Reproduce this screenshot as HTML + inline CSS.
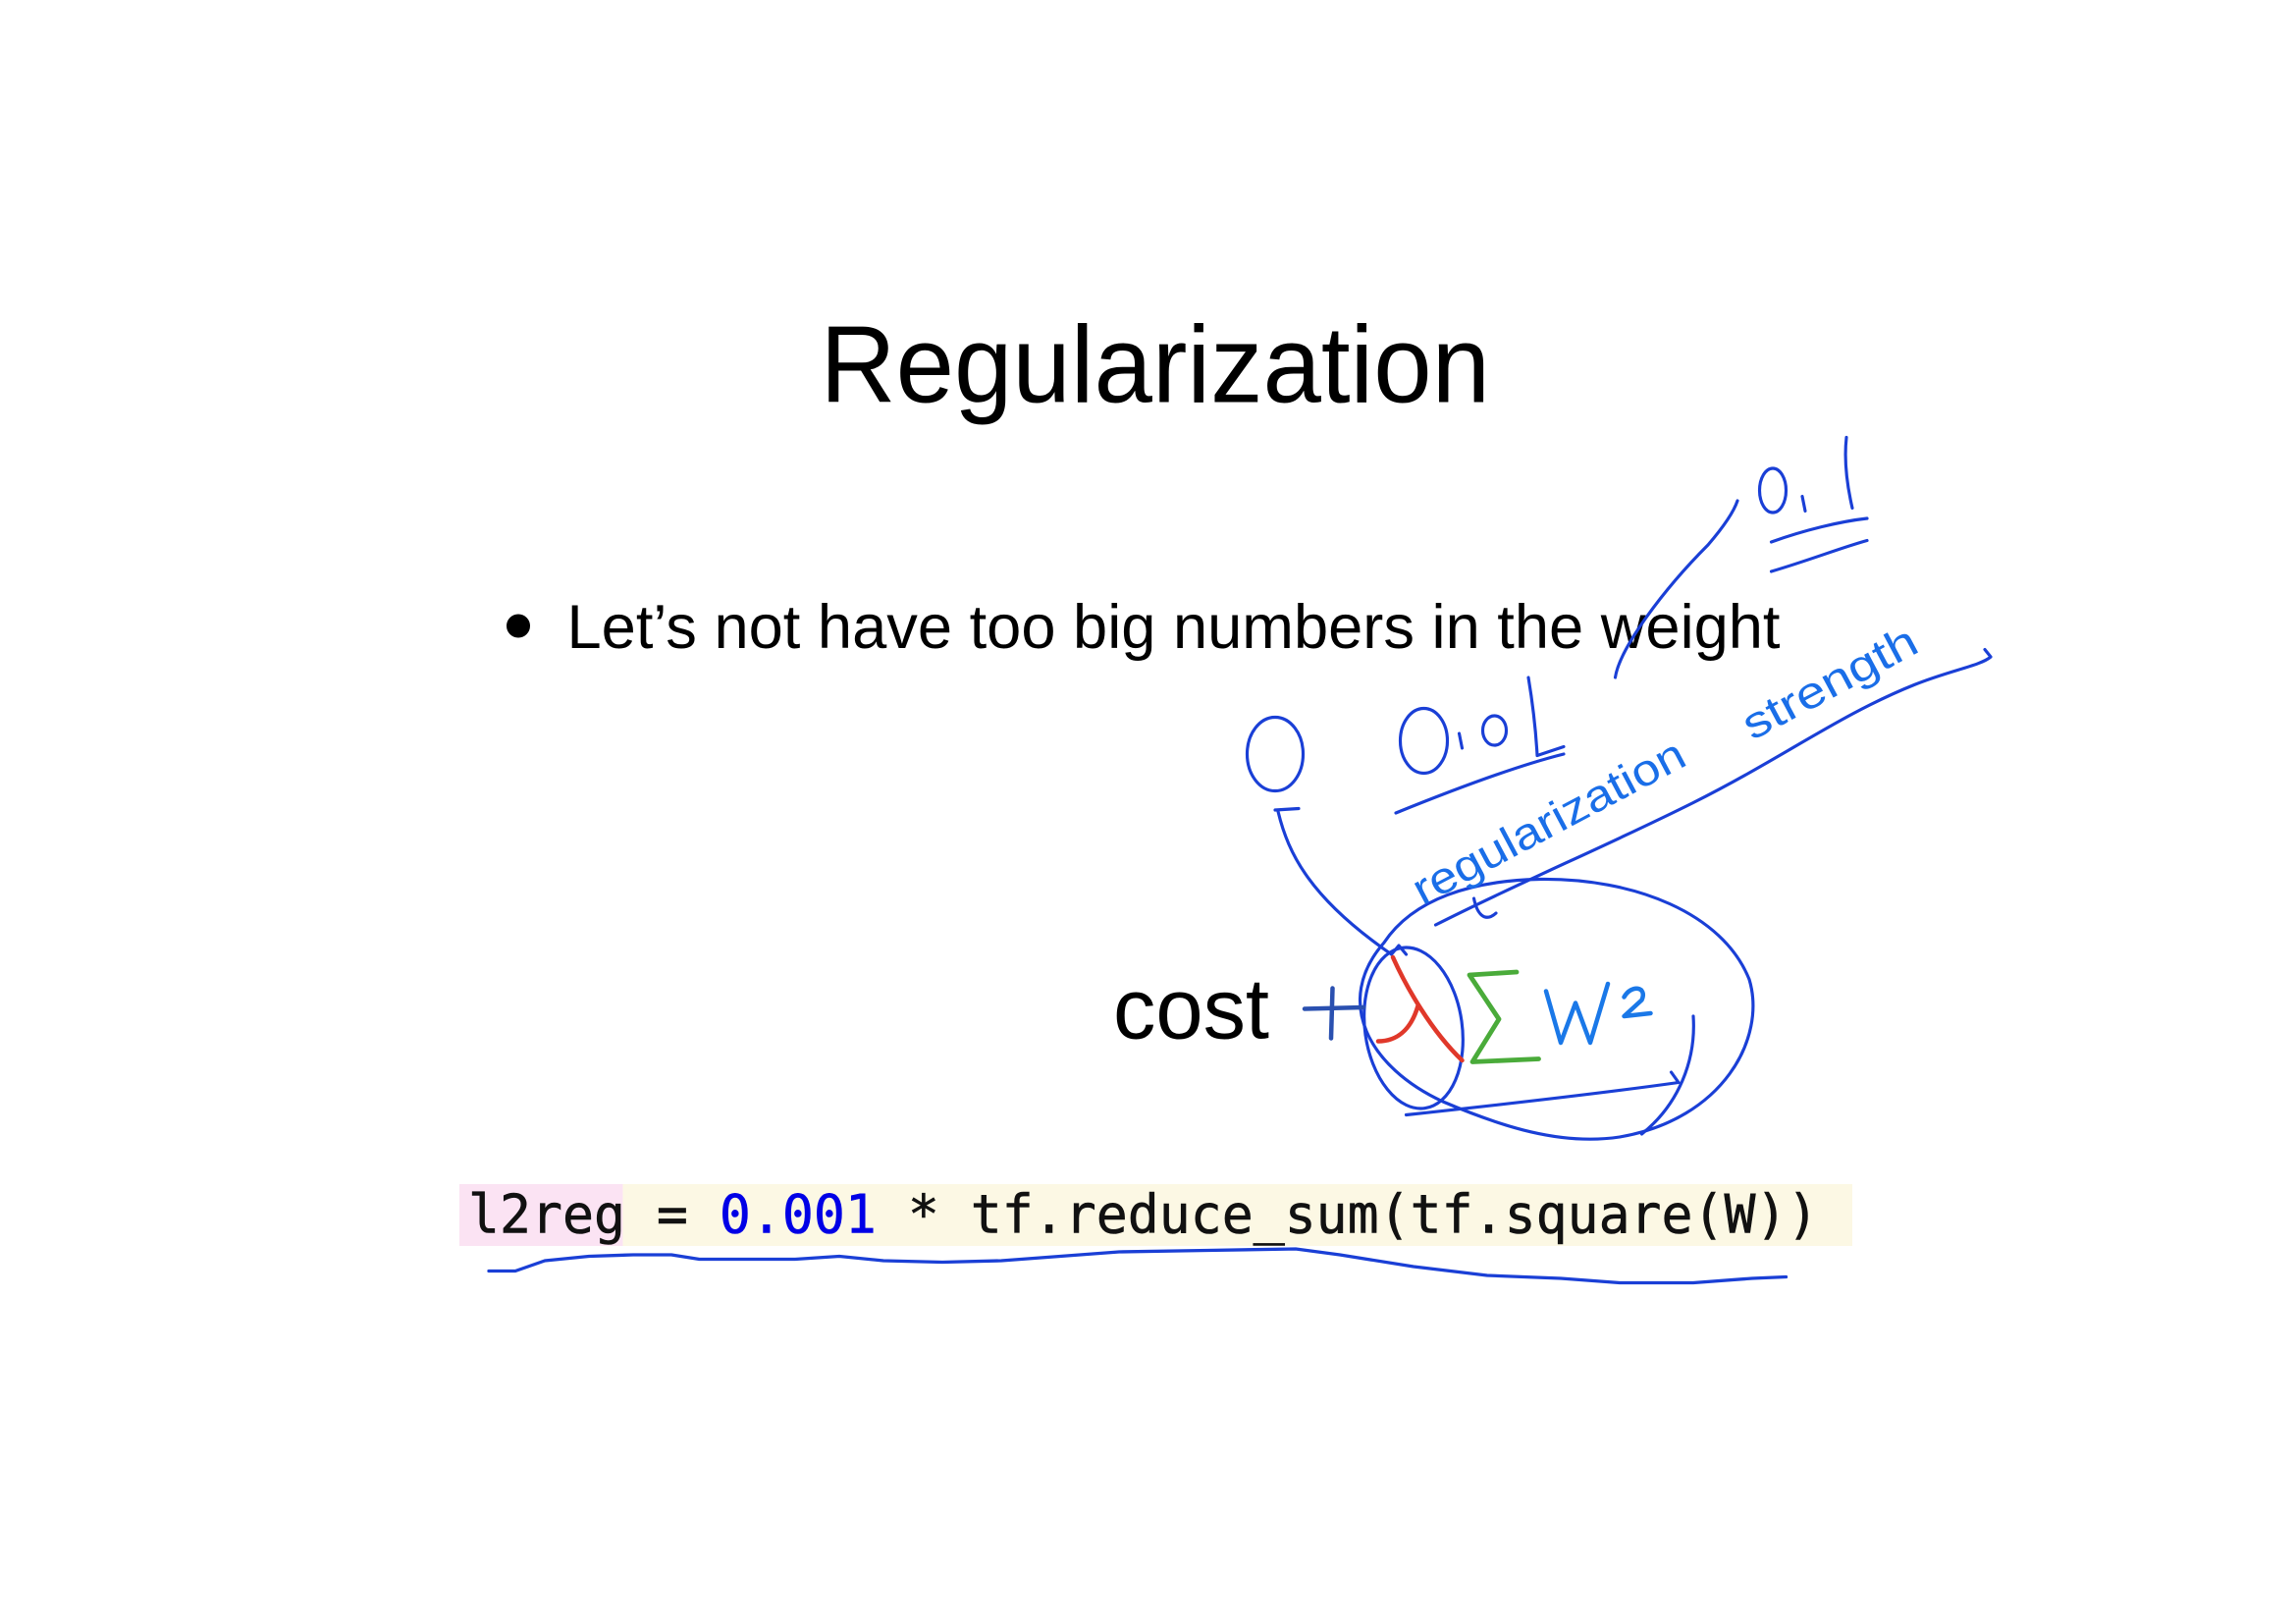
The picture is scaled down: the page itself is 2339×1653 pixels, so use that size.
<!DOCTYPE html>
<html><head><meta charset="utf-8"><style>
html,body{margin:0;padding:0;background:#fff;}
svg{display:block}
</style></head><body>
<svg width="2339" height="1653" viewBox="0 0 1559.33 1102" xmlns="http://www.w3.org/2000/svg">
<rect width="1559.33" height="1102" fill="#fff"/>
<text x="557" y="273" font-family="Liberation Sans, sans-serif" font-size="74" fill="#000" textLength="455" lengthAdjust="spacingAndGlyphs">Regularization</text>
<circle cx="352" cy="425" r="8" fill="#000"/>
<text x="385" y="440" font-family="Liberation Sans, sans-serif" font-size="42" fill="#000" textLength="824" lengthAdjust="spacingAndGlyphs">Let’s not have too big numbers in the weight</text>

<rect x="312" y="804" width="946" height="42" fill="#fcf8e4"/>
<rect x="312" y="804" width="111" height="42" fill="#fbe3f3"/>
<text x="318" y="837" font-family="DejaVu Sans Mono, Liberation Mono, monospace" font-size="36" fill="#111" stroke="#111" stroke-width="0.4" textLength="917" lengthAdjust="spacingAndGlyphs">l2reg = <tspan fill="#0000e6" stroke="#0000e6">0.001</tspan> * tf.reduce_sum(tf.square(W))</text>

<text x="756" y="705" font-family="Liberation Sans, sans-serif" font-size="58" fill="#000" textLength="106" lengthAdjust="spacingAndGlyphs">cost</text>

<g fill="none" stroke="#1a3fd6" stroke-width="2.1" stroke-linecap="round" stroke-linejoin="round">
 <ellipse cx="1204" cy="333" rx="9" ry="15"/>
 <path d="M1224,337 L1226,347"/>
 <path d="M1254,297 C1252,315 1255,332 1258,345"/>
 <path d="M1203,368 C1225,360 1250,354 1268,352"/>
 <path d="M1203,388 C1230,380 1250,372 1268,367"/>
 <path d="M1097,460 C1100,440 1130,400 1160,370 C1172,356 1178,346 1180,340"/>
 <ellipse cx="866" cy="512" rx="19" ry="25"/>
 <path d="M866,550 L882,549"/>
 <path d="M868,551 C875,580 890,610 945,648"/>
 <ellipse cx="967" cy="503" rx="16" ry="22"/>
 <path d="M991,498 L993,508"/>
 <ellipse cx="1015" cy="496" rx="8" ry="10"/>
 <path d="M1038,460 C1041,478 1043,495 1044,513 L1062,507"/>
 <path d="M948,552 C985,537 1030,520 1062,512"/>
 <path d="M975,628 C1030,600 1090,575 1150,545 C1210,515 1250,485 1300,465 C1325,455 1345,452 1352,446 L1348,441"/>
 <path d="M940,640 C960,610 1000,598 1045,597 C1110,596 1170,620 1188,665 C1200,705 1170,760 1100,772 C1060,778 1020,765 980,748 C930,725 905,680 940,640 Z"/>
 <ellipse cx="960" cy="698" rx="33" ry="55" transform="rotate(-8 960 698)"/>
 <path d="M945,648 L950,642 L955,648"/>
 <path d="M955,757 C1020,750 1090,742 1140,735 L1135,728"/>
 <path d="M1150,690 C1152,720 1140,750 1115,770"/>
 <path d="M1001,610 C1003,620 1008,627 1016,620"/>
</g>
<text x="966" y="615" transform="rotate(-28 966 615)" font-family="Liberation Sans Narrow, Liberation Sans, sans-serif" font-size="30" fill="#1a6ee8" textLength="205" lengthAdjust="spacingAndGlyphs">regularization</text>
<text x="1190" y="503" transform="rotate(-28 1190 503)" font-family="Liberation Sans Narrow, Liberation Sans, sans-serif" font-size="30" fill="#1a6ee8" textLength="130" lengthAdjust="spacingAndGlyphs">strength</text>
<g fill="none" stroke="#2a50b0" stroke-width="3" stroke-linecap="round">
 <path d="M886,685 L926,684"/><path d="M905,671 L904,705"/>
</g>
<g fill="none" stroke="#e0382a" stroke-width="3" stroke-linecap="round">
 <path d="M946,650 C955,670 972,700 993,720"/>
 <path d="M963,683 C958,700 948,707 936,707"/>
</g>
<path d="M1030,660 L998,662 L1018,692 L1000,721 L1045,719" fill="none" stroke="#4aab3a" stroke-width="3.2" stroke-linecap="round" stroke-linejoin="round"/>
<g fill="none" stroke="#1a78e8" stroke-width="3" stroke-linecap="round" stroke-linejoin="round">
 <path d="M1050,673 L1060,708 L1070,681 L1080,708 L1092,668"/>
 <path d="M1103,677 C1108,668 1119,670 1115,679 L1103,690 L1121,688"/>
</g>
<path d="M332,863 L350,863 L370,856 L400,853 L430,852 L456,852 L475,855 L500,855 L540,855 L570,853 L600,856 L640,857 L680,856 L720,853 L760,850 L820,849 L880,848 L910,852 L960,860 L1010,866 L1060,868 L1100,871 L1150,871 L1190,868 L1213,867" fill="none" stroke="#1a3fd6" stroke-width="2.2" stroke-linecap="round" stroke-linejoin="round"/>
</svg>
</body></html>
